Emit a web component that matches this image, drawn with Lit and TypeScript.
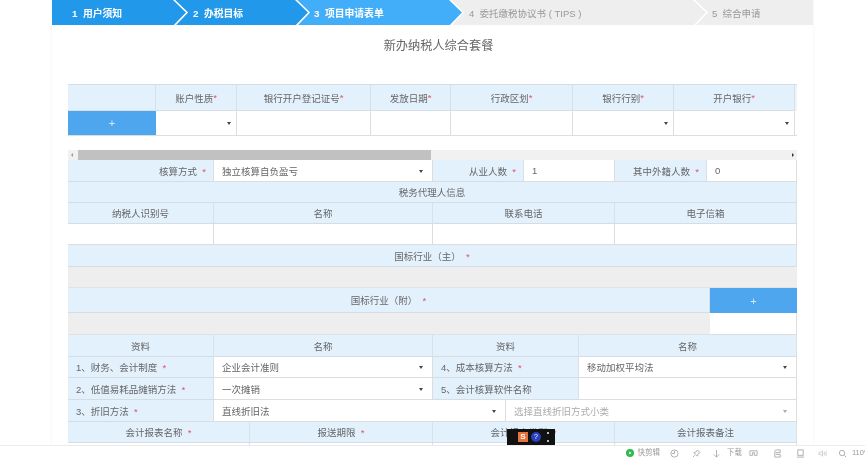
import { LitElement, html, css, nothing } from "lit";
import { customElement } from "lit/decorators.js";

type Cell = { t?: string; req?: boolean; k?: string; v?: string; ph?: boolean };

const c = (t: string, k = "hc", req = false): Cell => ({ t, k, req });
const sel = (v = "", ph = false): Cell => ({ k: "sel", v, ph });
const inp = (v = ""): Cell => ({ k: "inp", v });

const ROWS: { h: number; cols: string; cells: Cell[] }[] = [
  { h: 22, cols: "146px 219px 91px 91px 92px 90px", cells: [c("核算方式", "hr", true), sel("独立核算自负盈亏"), c("从业人数", "hr", true), inp("1"), c("其中外籍人数", "hr", true), inp("0")] },
  { h: 21, cols: "1fr", cells: [c("税务代理人信息")] },
  { h: 21, cols: "146px 219px 182px 182px", cells: [c("纳税人识别号"), c("名称"), c("联系电话"), c("电子信箱")] },
  { h: 21, cols: "146px 219px 182px 182px", cells: [inp(), inp(), inp(), inp()] },
  { h: 22, cols: "1fr", cells: [c("国标行业（主）", "hc", true)] },
  { h: 21, cols: "1fr", cells: [{ k: "gray" }] },
  { h: 25, cols: "642px 87px", cells: [c("国标行业（附）", "hc", true), { k: "add", t: "+" }] },
  { h: 22, cols: "642px 87px", cells: [{ k: "gray" }, inp()] },
  { h: 22, cols: "146px 219px 146px 218px", cells: [c("资料"), c("名称"), c("资料"), c("名称")] },
  { h: 21, cols: "146px 219px 146px 218px", cells: [c("1、财务、会计制度", "hl", true), sel("企业会计准则"), c("4、成本核算方法", "hl", true), sel("移动加权平均法")] },
  { h: 22, cols: "146px 219px 146px 218px", cells: [c("2、低值易耗品摊销方法", "hl", true), sel("一次摊销"), c("5、会计核算软件名称", "hl"), inp()] },
  { h: 22, cols: "146px 292px 291px", cells: [c("3、折旧方法", "hl", true), sel("直线折旧法"), sel("选择直线折旧方式小类", true)] },
  { h: 21, cols: "182px 183px 182px 182px", cells: [c("会计报表名称", "hc", true), c("报送期限", "hc", true), c("会计报表类型", "hc", true), c("会计报表备注")] },
  { h: 22, cols: "182px 183px 182px 182px", cells: [inp(), inp(), inp(), inp()] },
];

const TOP_HEAD = ["", "账户性质", "银行开户登记证号", "发放日期", "行政区划", "银行行别", "开户银行"];

@customElement("app-root")
export class AppRoot extends LitElement {
  static styles = css`
    :host {
      display: block;
      width: 865px;
      height: 460px;
      overflow: hidden;
      background: #fff;
      font-family: "Liberation Sans", "Noto Sans CJK SC", sans-serif;
      font-size: 9.5px;
      color: #666;
      filter: blur(0.35px);
    }
    .page { height: 460px; display: flex; flex-direction: column; position: relative; }
    .main { height: 446px; overflow: hidden; }
    .card {
      width: 761px;
      margin-left: 52px;
      height: 446px;
      overflow: hidden;
      box-shadow: 0 0 3px rgba(0, 0, 0, 0.06);
      background: #fff;
    }
    .steps { display: flex; height: 25px; background: #eee; font-size: 9.8px; }
    .step {
      position: relative;
      display: flex;
      align-items: center;
      font-weight: bold;
      color: #fff;
      white-space: pre;
    }
    .step.off { color: #999; font-weight: normal; }
    .step svg { position: absolute; left: 100%; top: 0; width: 16px; height: 25px; z-index: 1; }
    .s1 { width: 121px; padding-left: 20px; box-sizing: border-box; background: #2298ea; }
    .s2 { width: 122px; padding-left: 20px; box-sizing: border-box; background: #2298ea; }
    .s3 { width: 154px; padding-left: 19px; box-sizing: border-box; background: #42aef9; }
    .s4 { width: 244px; padding-left: 20px; box-sizing: border-box; font-size: 9.5px; }
    .s5 { flex: 1; padding-left: 19px; box-sizing: border-box; font-size: 9.5px; }
    h1 {
      margin: 0 0 17px;
      padding-left: 12px;
      height: 42px;
      line-height: 42px;
      text-align: center;
      font-size: 12.2px;
      font-weight: normal;
      color: #666;
    }
    .content { width: 729px; margin-left: 16px; }
    .top { border-top: 1px solid #d3dde6; }
    .tr { display: grid; }
    .top .tr { grid-template-columns: 88px 81px 134px 80px 122px 101px 121px; }
    .top .head { height: 26px; background: #edf4fa; }
    .top .body { height: 25px; border-bottom: 1px solid #ddd; box-sizing: border-box; }
    .th {
      background: #e3f1fd;
      border-right: 1px solid #d8dfe6;
      border-bottom: 1px solid #d8dfe6;
      display: flex;
      align-items: center;
      justify-content: center;
      box-sizing: border-box;
    }
    .req { color: #e0556b; }
    .plus, .add {
      background: #4ea6ef;
      color: #d5eafb;
      display: flex;
      align-items: center;
      justify-content: center;
      font-size: 11px;
    }
    .box { border-right: 1px solid #ddd; background: #fff; position: relative; box-sizing: border-box; }
    .caret {
      position: absolute;
      right: 5px;
      top: 50%;
      margin-top: -1px;
      border-left: 2px solid transparent;
      border-right: 2px solid transparent;
      border-top: 3px solid #444;
    }
    .scroll {
      margin-top: 14px;
      height: 10px;
      background: #f1f1f1;
      display: flex;
      align-items: center;
      position: relative;
    }
    .thumb { margin-left: 10px; width: 353px; height: 10px; background: #c1c1c1; }
    .arr { position: absolute; top: 3px; border-top: 2px solid transparent; border-bottom: 2px solid transparent; }
    .arr.l { left: 3px; border-right: 2px solid #999; }
    .arr.r { right: 3px; border-left: 2px solid #333; }
    .row > * { box-sizing: border-box; min-width: 0; }
    .cell {
      background: #e3f1fd;
      border-right: 1px solid #d9e1e8;
      border-bottom: 1px solid #d5dce3;
      display: flex;
      align-items: center;
      white-space: nowrap;
    }
    .hc { justify-content: center; }
    .hr { justify-content: flex-end; padding-right: 7px; }
    .hl { padding-left: 8px; }
    .ctl {
      position: relative;
      background: #fff;
      border-right: 1px solid #ddd;
      border-bottom: 1px solid #ddd;
      display: flex;
      align-items: center;
      padding-left: 8px;
      color: #666;
      white-space: nowrap;
    }
    .ctl.ph { color: #aaa; }
    .ctl .caret { right: 9px; }
    .ctl.ph .caret { border-top-color: #aaa; }
    .gray { background: #eee; border-bottom: 1px solid #e2e2e2; }
    .status {
      height: 14px;
      border-top: 1px solid #ececec;
      background: #fff;
      display: flex;
      align-items: center;
      justify-content: flex-end;
      color: #9a9a9a;
      font-size: 7.5px;
      line-height: 10px;
      overflow: hidden;
      white-space: nowrap;
    }
    .status svg { width: 9px; height: 9px; flex: none; fill: none; stroke: #aaa; stroke-width: 1; }
    .status > :nth-child(2) { margin-left: 9.5px; }
    .status > :nth-child(3) { margin-left: 13px; }
    .status > :nth-child(4) { margin-left: 11px; }
    .status > :nth-child(5) { margin-left: 6.5px; }
    .status > :nth-child(6) { margin-left: 15px; }
    .status > :nth-child(7) { margin-left: 14px; }
    .status > :nth-child(8) { margin-left: 13px; }
    .status > :nth-child(9) { margin-left: 11.5px; }
    .g { display: flex; align-items: center; gap: 4px; }
    .g.dl { gap: 6.5px; }
    .status .dot { width: 8px; height: 8px; fill: #2dbb4e; stroke: none; }
    .zoom { width: 27px; overflow: hidden; flex: none; display: flex; align-items: center; gap: 5px; }
    .ime {
      position: absolute;
      left: 507px;
      top: 429px;
      width: 48px;
      height: 16px;
      background: #111;
      display: flex;
      align-items: center;
      gap: 3px;
      padding-left: 11px;
      box-sizing: border-box;
    }
    .ime .s {
      width: 10px;
      height: 10px;
      background: #e8703a;
      color: #fff;
      font-size: 8px;
      font-weight: bold;
      line-height: 10px;
      text-align: center;
    }
    .ime .q {
      width: 10px;
      height: 10px;
      border-radius: 50%;
      background: #2a3fc0;
      color: #fff;
      font-size: 7px;
      line-height: 10px;
      text-align: center;
    }
    .ime .d { width: 2px; height: 10px; margin-left: 3px; display: flex; flex-direction: column; justify-content: space-between; }
    .ime .d i { display: block; height: 2px; background: #bbb; }
  `;

  private arrow(fill: string) {
    return html`<svg viewBox="0 0 16 25" aria-hidden="true">
      <path d="M0 -1 L14 12.5 L1 26 L0 26 Z" fill=${fill}></path>
      <path d="M0 -1 L14 12.5 L1 26" fill="none" stroke="#fff" stroke-width="1.6"></path>
    </svg>`;
  }

  private renderCell(x: Cell) {
    if (x.k === "sel")
      return html`<div class="ctl ${x.ph ? "ph" : ""}">${x.v}<span class="caret"></span></div>`;
    if (x.k === "inp") return html`<div class="ctl">${x.v}</div>`;
    if (x.k === "gray") return html`<div class="gray"></div>`;
    if (x.k === "add") return html`<div class="add">${x.t}</div>`;
    return html`<div class="cell ${x.k}">
      <span>${x.t}${x.req ? html`<span class="req">&nbsp;&nbsp;*</span>` : nothing}</span>
    </div>`;
  }

  render() {
    return html`
      <div class="page">
        <div class="main">
          <div class="card">
            <div class="steps">
              <div class="step s1">1  用户须知${this.arrow("#2298ea")}</div>
              <div class="step s2">2  办税目标${this.arrow("#2298ea")}</div>
              <div class="step s3">3  项目申请表单${this.arrow("#42aef9")}</div>
              <div class="step off s4">4  委托缴税协议书 ( TIPS )${this.arrow("#eee")}</div>
              <div class="step off s5">5  综合申请</div>
            </div>
            <h1>新办纳税人综合套餐</h1>
            <div class="content">
              <div class="top">
                <div class="tr head">
                  ${TOP_HEAD.map(
                    (t) => html`<div class="th">${t}${t ? html`<span class="req">*</span>` : nothing}</div>`
                  )}
                </div>
                <div class="tr body">
                  <div class="plus">+</div>
                  <div class="box"><span class="caret"></span></div>
                  <div class="box"></div>
                  <div class="box"></div>
                  <div class="box"></div>
                  <div class="box"><span class="caret"></span></div>
                  <div class="box"><span class="caret"></span></div>
                </div>
              </div>
              <div class="scroll">
                <span class="arr l"></span>
                <div class="thumb"></div>
                <span class="arr r"></span>
              </div>
              ${ROWS.map(
                (r) => html`<div
                  class="tr row"
                  style="height:${r.h}px;grid-template-columns:${r.cols}"
                >
                  ${r.cells.map((x) => this.renderCell(x))}
                </div>`
              )}
            </div>
          </div>
        </div>
        <div class="status">
          <span class="g">
            <svg class="dot" viewBox="0 0 10 10"><circle cx="5" cy="5" r="5"></circle><path d="M4 3l3 2-3 2z" fill="#fff"></path></svg>快剪辑
          </span>
          <svg viewBox="0 0 10 10"><circle cx="5" cy="5" r="4"></circle><path d="M2 5h3V2"></path></svg>
          <svg viewBox="0 0 10 10"><path d="M6 1l3 3-2 1-1 3-4-4 3-1zM3 7L1 9"></path></svg>
          <span class="g dl">
            <svg viewBox="0 0 10 10"><path d="M5 1v8M2 6l3 3 3-3"></path></svg>下载
          </span>
          <svg viewBox="0 0 10 10"><path d="M1 2h8v5H6V4H4v3H1z"></path></svg>
          <svg viewBox="0 0 10 10"><path d="M2 9V3a2 2 0 0 1 2-2h4v3H3M2 9h6V6H3"></path></svg>
          <svg viewBox="0 0 10 10"><rect x="2" y="1" width="6" height="6"></rect><path d="M1 9h8"></path></svg>
          <svg viewBox="0 0 10 10" style="opacity:.6"><path d="M1 4v2h2l2 2V2L3 4zM7 3v4M9 2v6"></path></svg>
          <span class="zoom">
            <svg viewBox="0 0 10 10"><circle cx="4.5" cy="4.5" r="3"></circle><path d="M7 7l2 2"></path></svg>110%
          </span>
        </div>
        <div class="ime">
          <span class="s">S</span>
          <span class="q">?</span>
          <span class="d"><i></i><i></i></span>
        </div>
      </div>
    `;
  }
}
